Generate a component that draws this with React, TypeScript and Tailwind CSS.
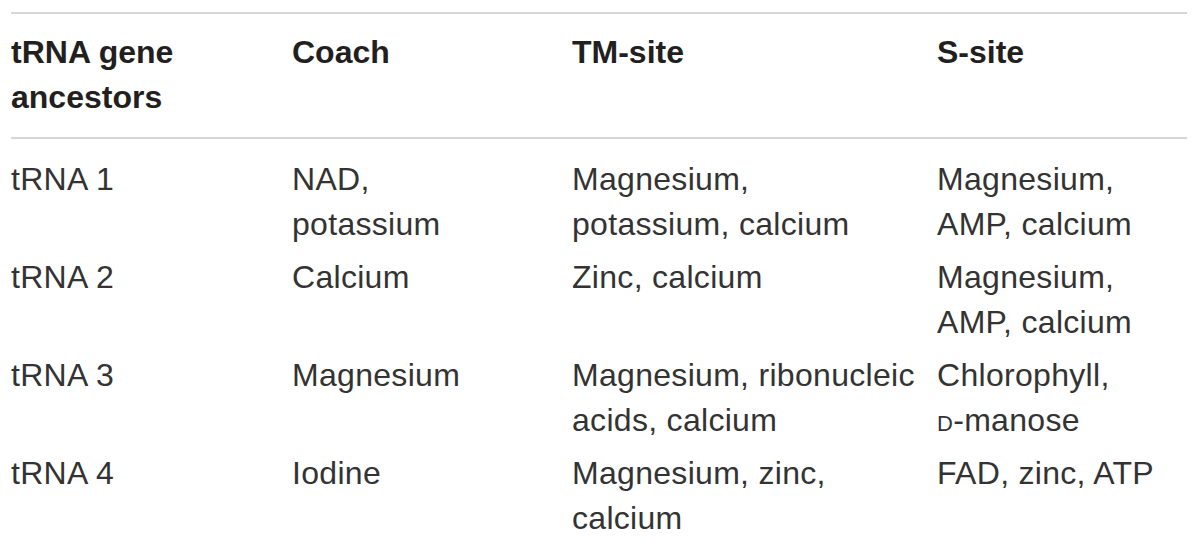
import React from "react";

const font = { fontFamily: '"Liberation Sans", Arial, sans-serif' };

function Cell({ children }: { children: React.ReactNode }) {
  return <div className="whitespace-nowrap">{children}</div>;
}

const rows: React.ReactNode[][] = [
  [
    "tRNA 1",
    <>NAD,<br />potassium</>,
    <>Magnesium,<br />potassium, calcium</>,
    <>Magnesium,<br />AMP, calcium</>,
  ],
  [
    "tRNA 2",
    "Calcium",
    "Zinc, calcium",
    <>Magnesium,<br />AMP, calcium</>,
  ],
  [
    "tRNA 3",
    "Magnesium",
    <>Magnesium, ribonucleic<br />acids, calcium</>,
    <>Chlorophyll,<br /><span className="[font-variant:small-caps]">d</span>-manose</>,
  ],
  [
    "tRNA 4",
    "Iodine",
    <>Magnesium, zinc,<br />calcium</>,
    "FAD, zinc, ATP",
  ],
];

export default function App() {
  return (
    <div className="w-[1200px] h-[546px] bg-white overflow-hidden pt-[12px] pl-[11px] pr-[13px]" style={font}>
      <div className="border-t-2 border-[#d6d6d6]">
        <div className="grid grid-cols-[281px_280px_365px_1fr] border-b-2 border-[#d6d6d6] pt-[16px] pb-[17px] text-[32px] leading-[45px] font-bold text-[#231f20]">
          <div>tRNA gene<br />ancestors</div>
          <div>Coach</div>
          <div>TM-site</div>
          <div>S-site</div>
        </div>
        <div className="pt-[18px] flex flex-col gap-[8px] text-[32px] leading-[45px] tracking-[0.3px] text-[#333333]">
          {rows.map((r, i) => (
            <div key={i} className="grid grid-cols-[281px_280px_365px_1fr]">
              {r.map((c, j) => (
                <Cell key={j}>{c}</Cell>
              ))}
            </div>
          ))}
        </div>
      </div>
    </div>
  );
}
